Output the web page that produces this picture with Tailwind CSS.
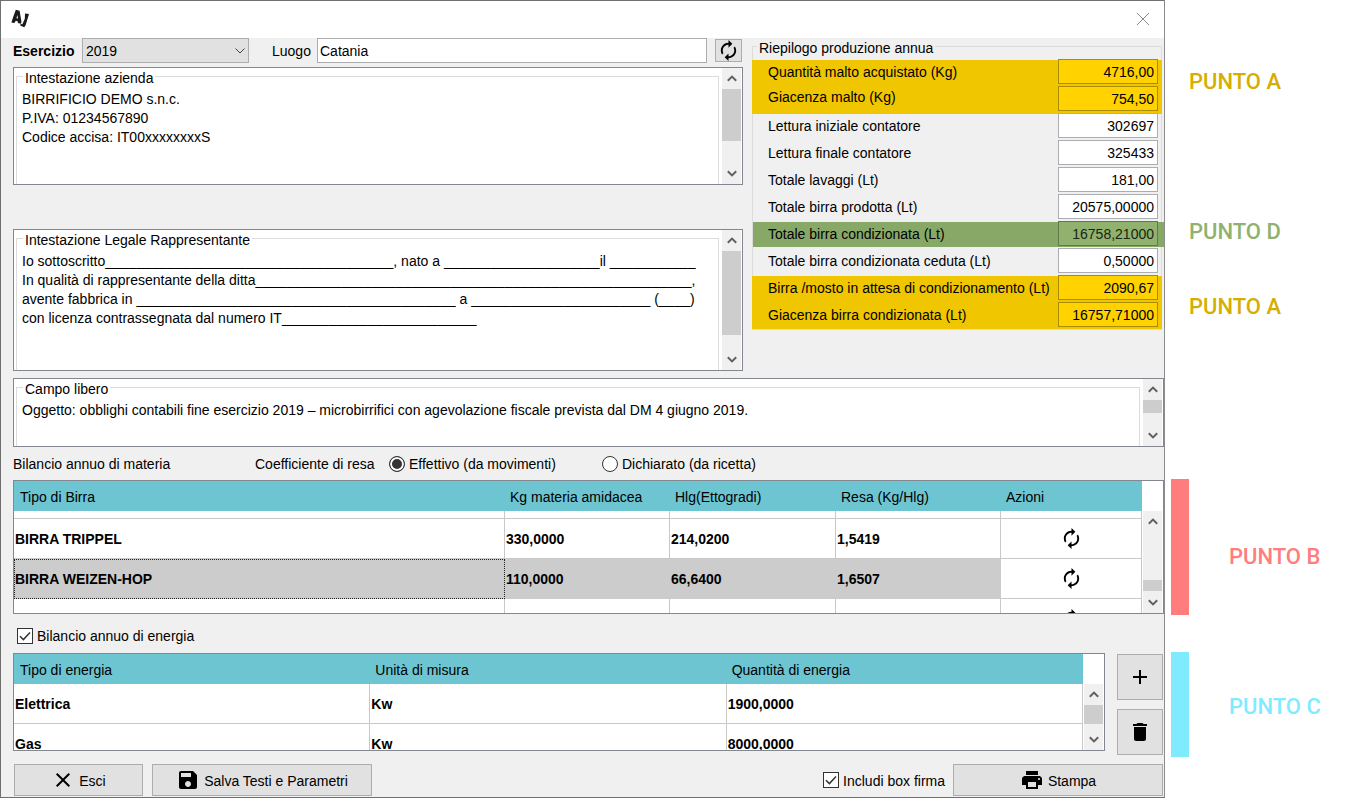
<!DOCTYPE html>
<html lang="it">
<head>
<meta charset="utf-8">
<title>Riepilogo produzione annua</title>
<script src="https://cdn.jsdelivr.net/npm/@tailwindcss/browser@4"></script>
</head>
<body class="flex bg-white font-['Liberation_Sans',Arial,sans-serif] text-[14px] leading-5 text-black">

<svg class="hidden" aria-hidden="true">
  <symbol id="renew" viewBox="0 0 24 24"><path d="M12 6v3l4-4-4-4v3c-4.42 0-8 3.58-8 8 0 1.57.46 3.03 1.24 4.26L6.7 14.8c-.45-.83-.7-1.79-.7-2.8 0-3.31 2.69-6 6-6zm6.76 1.74L17.3 9.2c.44.84.7 1.79.7 2.8 0 3.31-2.69 6-6 6v-3l-4 4 4 4v-3c4.42 0 8-3.58 8-8 0-1.57-.46-3.03-1.24-4.26z"/></symbol>
  <symbol id="up" viewBox="0 0 10 7"><path d="M.8 5.8 5 1.6l4.200 4.200" fill="none" stroke="#606060" stroke-width="2"/></symbol>
  <symbol id="down" viewBox="0 0 10 7"><path d="M.8 1.200 5 5.400l4.200-4.200" fill="none" stroke="#606060" stroke-width="2"/></symbol>
  <symbol id="tick" viewBox="0 0 16 16"><path d="M3 8.200 6.400 11.600 13 4.600" fill="none" stroke="#333" stroke-width="1.500"/></symbol>
</svg>

<main class="min-w-0 flex-1 border border-[#707070] border-r-[#8c8c8c] bg-[#f0f0f0]">
  <header class="flex h-[37px] items-center justify-between bg-white pb-px pl-[10px] pr-[14px]">
    <svg class="size-5" viewBox="0 0 20 20" role="img" aria-label="AJ">
      <path d="M4.800 0.800 8.600 1.800 10.400 12.600 10 14.800 7 14 6.600 12.300 4.800 11.800 3.400 14 0.400 13.400 2 8.500zM6.600 6 5.400 9.300 6.900 9.600z" fill="#1a1a1a" fill-rule="evenodd"/>
      <path d="M14 4.600 18 5 14.600 16.200 13.200 18.200 9.200 16.600 9.600 15 11.400 15.200 13.800 9.800z" fill="#1a1a1a"/>
    </svg>
    <button type="button" aria-label="Chiudi" class="flex size-[14px] items-center justify-center">
      <svg class="size-[14px]" viewBox="0 0 14 14" fill="none" stroke="#8a8a8a"><path d="M1 1l12 12M13 1 1 13"/></svg>
    </button>
  </header>

  <form class="flex flex-col pl-3">
    <div class="flex gap-[9px] pr-[2px]">
      <div class="flex min-w-0 flex-1 flex-col">
        <div class="flex h-[25px] items-center">
          <label for="anno" class="w-[69px] font-bold">Esercizio</label>
          <div class="relative w-[167px]">
            <select id="anno" class="block h-[25px] w-full appearance-none border border-[#adadad] bg-[#e1e1e1] pl-[3px]"><option>2019</option></select>
            <svg class="pointer-events-none absolute right-[3px] top-[9px] h-[8px] w-3" viewBox="0 0 12 8" fill="none" stroke="#444"><path d="M1.500 1.500 6 6l4.500-4.500"/></svg>
          </div>
          <label for="luogo" class="ml-[23px] w-[45px]">Luogo</label>
          <input id="luogo" value="Catania" class="h-[25px] min-w-0 flex-1 border border-[#adadad] bg-white px-[2px]">
          <button type="button" aria-label="Aggiorna" class="ml-2 mr-px flex h-[23px] w-[27px] items-center justify-center border border-[#adadad] bg-[#e1e1e1]"><svg class="size-[23px]"><use href="#renew"/></svg></button>
        </div>

        <section class="mt-1 flex h-[118px] overflow-hidden border border-[#828790] bg-white">
          <fieldset class="ml-[2px] mr-[3px] min-w-0 flex-1 border border-b-0 border-[#dcdcdc] pl-[5px]">
            <legend id="l1" class="ml-px px-[2px] pt-1 leading-3">Intestazione azienda</legend>
            <textarea aria-labelledby="l1" rows="5" class="mt-[6px] block w-full resize-none overflow-hidden whitespace-pre leading-[19px] outline-none">BIRRIFICIO DEMO s.n.c.
P.IVA: 01234567890
Codice accisa: IT00xxxxxxxxS</textarea>
          </fieldset>
          <div class="mr-px flex w-[19px] flex-col items-center justify-between bg-[#f0f0f0] pb-[7px] pt-[7px]">
            <svg class="h-[7px] w-[10px] shrink-0"><use href="#up"/></svg>
            <div class="mb-auto mt-[7px] h-[52px] w-full bg-[#cdcdcd]"></div>
            <svg class="h-[7px] w-[10px] shrink-0"><use href="#down"/></svg>
          </div>
        </section>

        <section class="mt-11 flex h-[142px] overflow-hidden border border-[#828790] bg-white">
          <fieldset class="ml-[2px] mr-[3px] min-w-0 flex-1 border border-b-0 border-[#dcdcdc] pl-[5px]">
            <legend id="l2" class="ml-px px-[2px] pt-1 leading-3">Intestazione Legale Rappresentante</legend>
            <textarea aria-labelledby="l2" rows="6" class="mt-[6px] block w-full resize-none overflow-hidden whitespace-pre leading-[19px] outline-none">Io sottoscritto_____________________________________, nato a ____________________il ___________
In qualità di rappresentante della ditta________________________________________________________,
avente fabbrica in _________________________________________ a _______________________ (____)
con licenza contrassegnata dal numero IT_________________________</textarea>
          </fieldset>
          <div class="mr-px flex w-[19px] flex-col items-center justify-between bg-[#f0f0f0] pb-[7px] pt-[7px]">
            <svg class="h-[7px] w-[10px] shrink-0"><use href="#up"/></svg>
            <div class="mb-auto mt-[7px] h-[84px] w-full bg-[#cdcdcd]"></div>
            <svg class="h-[7px] w-[10px] shrink-0"><use href="#down"/></svg>
          </div>
        </section>
      </div>

      <fieldset class="w-[410px] self-start border border-[#dcdcdc]">
        <legend class="ml-1 px-[2px] pt-1 leading-3">Riepilogo produzione annua</legend>
        <div class="-mx-px mt-[6px] bg-[#f0c600] pl-4 pr-1">
          <div class="flex h-[27px] items-start justify-between"><label for="q1" class="leading-6">Quantità malto acquistato (Kg)</label><input id="q1" value="4716,00" class="-mt-px h-[25px] w-[100px] border border-[#ab8d00] bg-[#ffd200] px-[3px] text-right"></div>
          <div class="flex h-[27px] items-start justify-between"><label for="q2" class="leading-5">Giacenza malto (Kg)</label><input id="q2" value="754,50" class="-mt-px h-[25px] w-[100px] border border-[#ab8d00] bg-[#ffd200] px-[3px] text-right"></div>
        </div>
        <div class="-mx-px pl-4 pr-1">
          <div class="flex h-[27px] items-start justify-between"><label for="q3" class="leading-6">Lettura iniziale contatore</label><input id="q3" value="302697" class="-mt-px h-[25px] w-[100px] border border-[#abadb3] bg-white px-[3px] text-right"></div>
          <div class="flex h-[27px] items-start justify-between"><label for="q4" class="leading-6">Lettura finale contatore</label><input id="q4" value="325433" class="-mt-px h-[25px] w-[100px] border border-[#abadb3] bg-white px-[3px] text-right"></div>
          <div class="flex h-[27px] items-start justify-between"><label for="q5" class="leading-6">Totale lavaggi (Lt)</label><input id="q5" value="181,00" class="-mt-px h-[25px] w-[100px] border border-[#abadb3] bg-white px-[3px] text-right"></div>
          <div class="flex h-[27px] items-start justify-between"><label for="q6" class="leading-6">Totale birra prodotta (Lt)</label><input id="q6" value="20575,00000" class="-mt-px h-[25px] w-[100px] border border-[#abadb3] bg-white px-[3px] text-right"></div>
        </div>
        <div class="-mr-[3px] mb-[2px] bg-[#88a868] pl-[15px] pr-[6px]">
          <div class="flex h-[25px] items-start justify-between"><label for="q7" class="leading-6">Totale birra condizionata (Lt)</label><input id="q7" value="16758,21000" class="-mt-px h-[25px] w-[100px] border border-[#617a4a] bg-[#90b26e] px-[3px] text-right text-[#1a2412]"></div>
        </div>
        <div class="-mx-px pl-4 pr-1">
          <div class="flex h-[27px] items-start justify-between"><label for="q8" class="leading-6">Totale birra condizionata ceduta (Lt)</label><input id="q8" value="0,50000" class="-mt-px h-[25px] w-[100px] border border-[#abadb3] bg-white px-[3px] text-right"></div>
        </div>
        <div class="-mx-px bg-[#f0c600] pl-4 pr-1">
          <div class="flex h-[27px] items-start justify-between"><label for="q9" class="leading-6">Birra /mosto in attesa di condizionamento (Lt)</label><input id="q9" value="2090,67" class="-mt-px h-[25px] w-[100px] border border-[#ab8d00] bg-[#ffd200] px-[3px] text-right"></div>
          <div class="flex h-[26px] items-start justify-between"><label for="q10" class="leading-6">Giacenza birra condizionata (Lt)</label><input id="q10" value="16757,71000" class="-mt-px h-[25px] w-[100px] border border-[#ab8d00] bg-[#ffd200] px-[3px] text-right"></div>
        </div>
      </fieldset>
    </div>

    <section class="mt-[7px] flex h-[69px] overflow-hidden border border-[#828790] bg-white">
      <fieldset class="ml-[2px] mr-[3px] min-w-0 flex-1 border border-b-0 border-[#dcdcdc] pl-[5px]">
        <legend id="l3" class="ml-px px-[2px] pt-1 leading-3">Campo libero</legend>
        <textarea aria-labelledby="l3" rows="2" class="mt-[6px] block w-full resize-none overflow-hidden whitespace-pre leading-[19px] outline-none">Oggetto: obblighi contabili fine esercizio 2019 – microbirrifici con agevolazione fiscale prevista dal DM 4 giugno 2019.</textarea>
      </fieldset>
      <div class="mr-px flex w-[19px] flex-col items-center justify-between bg-[#f0f0f0] pb-[7px] pt-[7px]">
        <svg class="h-[7px] w-[10px] shrink-0"><use href="#up"/></svg>
        <div class="mb-auto mt-[7px] h-[13px] w-full bg-[#cdcdcd]"></div>
        <svg class="h-[7px] w-[10px] shrink-0"><use href="#down"/></svg>
      </div>
    </section>

    <div class="flex h-[33px] items-center">
      <span class="w-[242px]">Bilancio annuo di materia</span>
      <span class="w-[134px]">Coefficiente di resa</span>
      <label class="flex w-[213px] items-center gap-1"><input type="radio" name="resa" checked class="size-4 appearance-none rounded-full border border-[#333] bg-white checked:bg-[#333] checked:shadow-[inset_0_0_0_2px_white]">Effettivo (da movimenti)</label>
      <label class="flex items-center gap-1"><input type="radio" name="resa" class="size-4 appearance-none rounded-full border border-[#333] bg-white checked:bg-[#333] checked:shadow-[inset_0_0_0_2px_white]">Dichiarato (da ricetta)</label>
    </div>

    <div class="flex h-[134px] items-start overflow-hidden border border-[#828790] bg-white">
      <table class="w-full min-w-0 flex-1 table-fixed border-separate border-spacing-0">
        <colgroup><col><col class="w-[165px]"><col class="w-[166px]"><col class="w-[165px]"><col class="w-[141px]"></colgroup>
        <thead class="bg-[#6dc5d1]">
          <tr class="h-[30px] text-left">
            <th class="pl-[6px] pt-[2px] font-normal">Tipo di Birra</th><th class="pl-[5px] pt-[2px] font-normal">Kg materia amidacea</th><th class="pl-[5px] pt-[2px] font-normal">Hlg(Ettogradi)</th><th class="pl-[5px] pt-[2px] font-normal">Resa (Kg/Hlg)</th><th class="pl-[5px] pt-[2px] font-normal">Azioni</th>
          </tr>
        </thead>
        <tbody class="font-bold">
          <tr class="h-2">
            <td class="border-b border-r border-[#c8c8c8]"></td><td class="border-b border-r border-[#c8c8c8]"></td><td class="border-b border-r border-[#c8c8c8]"></td><td class="border-b border-r border-[#c8c8c8]"></td><td class="border-b border-r border-[#c8c8c8]"></td>
          </tr>
          <tr class="h-10">
            <td class="border-b border-r border-[#c8c8c8] pl-px">BIRRA TRIPPEL</td><td class="border-b border-r border-[#c8c8c8] pl-px">330,0000</td><td class="border-b border-r border-[#c8c8c8] pl-px">214,0200</td><td class="border-b border-r border-[#c8c8c8] pl-px">1,5419</td>
            <td class="border-b border-r border-[#c8c8c8]"><button type="button" aria-label="Ricalcola BIRRA TRIPPEL" class="mx-auto block"><svg class="size-[23px]"><use href="#renew"/></svg></button></td>
          </tr>
          <tr class="h-10">
            <td class="border border-dotted border-[#222] bg-[#cccccc]">BIRRA WEIZEN-HOP</td><td class="bg-[#cccccc] pl-px">110,0000</td><td class="bg-[#cccccc] pl-px">66,6400</td><td class="bg-[#cccccc] pl-px">1,6507</td>
            <td class="border-b border-r border-[#c8c8c8]"><button type="button" aria-label="Ricalcola BIRRA WEIZEN-HOP" class="mx-auto block"><svg class="size-[23px]"><use href="#renew"/></svg></button></td>
          </tr>
          <tr class="h-10">
            <td class="border-r border-[#c8c8c8]"></td><td class="border-r border-[#c8c8c8]"></td><td class="border-r border-[#c8c8c8]"></td><td class="border-r border-[#c8c8c8]"></td>
            <td class="border-r border-[#c8c8c8]"><button type="button" aria-label="Ricalcola" class="mx-auto block"><svg class="size-[23px]"><use href="#renew"/></svg></button></td>
          </tr>
        </tbody>
      </table>
      <div class="ml-px mr-px mt-[30px] flex h-[102px] w-[19px] flex-col items-center bg-[#f0f0f0] py-[7px]">
        <svg class="h-[7px] w-[10px] shrink-0"><use href="#up"/></svg>
        <div class="mb-[8px] mt-auto h-[11px] w-full bg-[#cdcdcd]"></div>
        <svg class="h-[7px] w-[10px] shrink-0"><use href="#down"/></svg>
      </div>
    </div>

    <label class="ml-1 mt-[12px] flex h-[20px] items-center gap-1 self-start">
      <span class="relative size-4"><input type="checkbox" checked class="peer block size-4 appearance-none border border-[#333] bg-white"><svg class="pointer-events-none absolute inset-0 hidden size-4 peer-checked:block"><use href="#tick"/></svg></span>
      Bilancio annuo di energia
    </label>

    <div class="mt-[7px] flex gap-3 pr-px">
      <div class="flex h-[98px] min-w-0 flex-1 items-start overflow-hidden border border-[#828790] bg-white">
        <table class="w-full min-w-0 flex-1 table-fixed border-separate border-spacing-0">
          <colgroup><col class="w-1/3"><col class="w-1/3"><col class="w-1/3"></colgroup>
          <thead class="bg-[#6dc5d1]">
            <tr class="h-[30px] text-left"><th class="pl-[6px] pt-[2px] font-normal">Tipo di energia</th><th class="pl-[5px] pt-[2px] font-normal">Unità di misura</th><th class="pl-[5px] pt-[2px] font-normal">Quantità di energia</th></tr>
          </thead>
          <tbody class="font-bold">
            <tr class="h-10"><td class="border-b border-r border-[#c8c8c8] pl-px">Elettrica</td><td class="border-b border-r border-[#c8c8c8] pl-px">Kw</td><td class="border-b border-r border-[#c8c8c8] pl-px">1900,0000</td></tr>
            <tr class="h-10"><td class="border-b border-r border-[#c8c8c8] pl-px">Gas</td><td class="border-b border-r border-[#c8c8c8] pl-px">Kw</td><td class="border-b border-r border-[#c8c8c8] pl-px">8000,0000</td></tr>
          </tbody>
        </table>
        <div class="ml-px mr-px mt-[30px] flex h-[66px] w-[19px] flex-col items-center justify-between bg-[#f0f0f0] py-[7px]">
          <svg class="h-[7px] w-[10px] shrink-0"><use href="#up"/></svg>
          <div class="mb-auto mt-[7px] h-[19px] w-full bg-[#cdcdcd]"></div>
          <svg class="h-[7px] w-[10px] shrink-0"><use href="#down"/></svg>
        </div>
      </div>
      <div class="flex flex-col gap-[9px] pt-px">
        <button type="button" aria-label="Aggiungi" class="flex size-[46px] items-center justify-center border border-[#adadad] bg-[#e1e1e1]"><svg class="size-6" viewBox="0 0 24 24"><path d="M19 13h-6v6h-2v-6H5v-2h6V5h2v6h6v2z"/></svg></button>
        <button type="button" aria-label="Elimina" class="flex size-[46px] items-center justify-center border border-[#adadad] bg-[#e1e1e1]"><svg class="size-6" viewBox="0 0 24 24"><path d="M6 19c0 1.100.9 2 2 2h8c1.100 0 2-.9 2-2V7H6v12zM19 4h-3.500l-1-1h-5l-1 1H5v2h14V4z"/></svg></button>
      </div>
    </div>

    <div class="mt-[9px] flex items-center pb-px pl-px pr-px">
      <button type="button" class="flex h-8 w-[129px] items-center justify-center gap-1 border border-[#adadad] bg-[#e1e1e1]"><svg class="size-6" viewBox="0 0 24 24"><path d="M19 6.410 17.590 5 12 10.590 6.410 5 5 6.410 10.590 12 5 17.590 6.410 19 12 13.410 17.590 19 19 17.590 13.410 12z"/></svg><span class="pt-[2px]">Esci</span></button>
      <button type="button" class="ml-[9px] flex h-8 w-[220px] items-center justify-center gap-1 border border-[#adadad] bg-[#e1e1e1]"><svg class="size-6" viewBox="0 0 24 24"><path d="M17 3H5c-1.110 0-2 .9-2 2v14c0 1.100.89 2 2 2h14c1.100 0 2-.9 2-2V7l-4-4zm-5 16c-1.660 0-3-1.340-3-3s1.340-3 3-3 3 1.340 3 3-1.340 3-3 3zm3-10H5V5h10v4z"/></svg><span class="pt-[2px]">Salva Testi e Parametri</span></button>
      <label class="ml-auto mr-2 flex items-center gap-1">
        <span class="relative size-4"><input type="checkbox" checked class="peer block size-4 appearance-none border border-[#333] bg-white"><svg class="pointer-events-none absolute inset-0 hidden size-4 peer-checked:block"><use href="#tick"/></svg></span>
        <span class="pt-[2px]">Includi box firma</span>
      </label>
      <button type="button" class="flex h-8 w-[210px] items-center justify-center gap-1 border border-[#adadad] bg-[#e1e1e1]"><svg class="size-6" viewBox="0 0 24 24"><path d="M19 8H5c-1.660 0-3 1.340-3 3v6h4v4h12v-4h4v-6c0-1.660-1.340-3-3-3zm-3 11H8v-5h8v5zm3-7c-.55 0-1-.45-1-1s.45-1 1-1 1 .45 1 1-.45 1-1 1zm-1-9H6v4h12V3z"/></svg><span class="pt-[2px]">Stampa</span></button>
    </div>
  </form>
</main>

<aside class="flex w-[199px] flex-col pl-[6px] pt-[67px] font-['Roboto',sans-serif] text-[22px] font-medium leading-[30px]">
  <p class="ml-[18px] text-[#d6ae00]">PUNTO A</p>
  <p class="ml-[18px] mt-[120px] text-[#8fb270]">PUNTO D</p>
  <p class="ml-[18px] mt-[45px] text-[#d6ae00]">PUNTO A</p>
  <div class="mt-[157px] flex h-[136px] items-center gap-10 text-[#ff7d7d]"><div class="h-full w-[18px] bg-[#ff7d7d]"></div><p class="pt-5">PUNTO B</p></div>
  <div class="mt-[37px] flex h-[105px] items-center gap-10 text-[#80ebff]"><div class="h-full w-[18px] bg-[#80ebff]"></div><p class="pt-1">PUNTO C</p></div>
</aside>
</body>
</html>
